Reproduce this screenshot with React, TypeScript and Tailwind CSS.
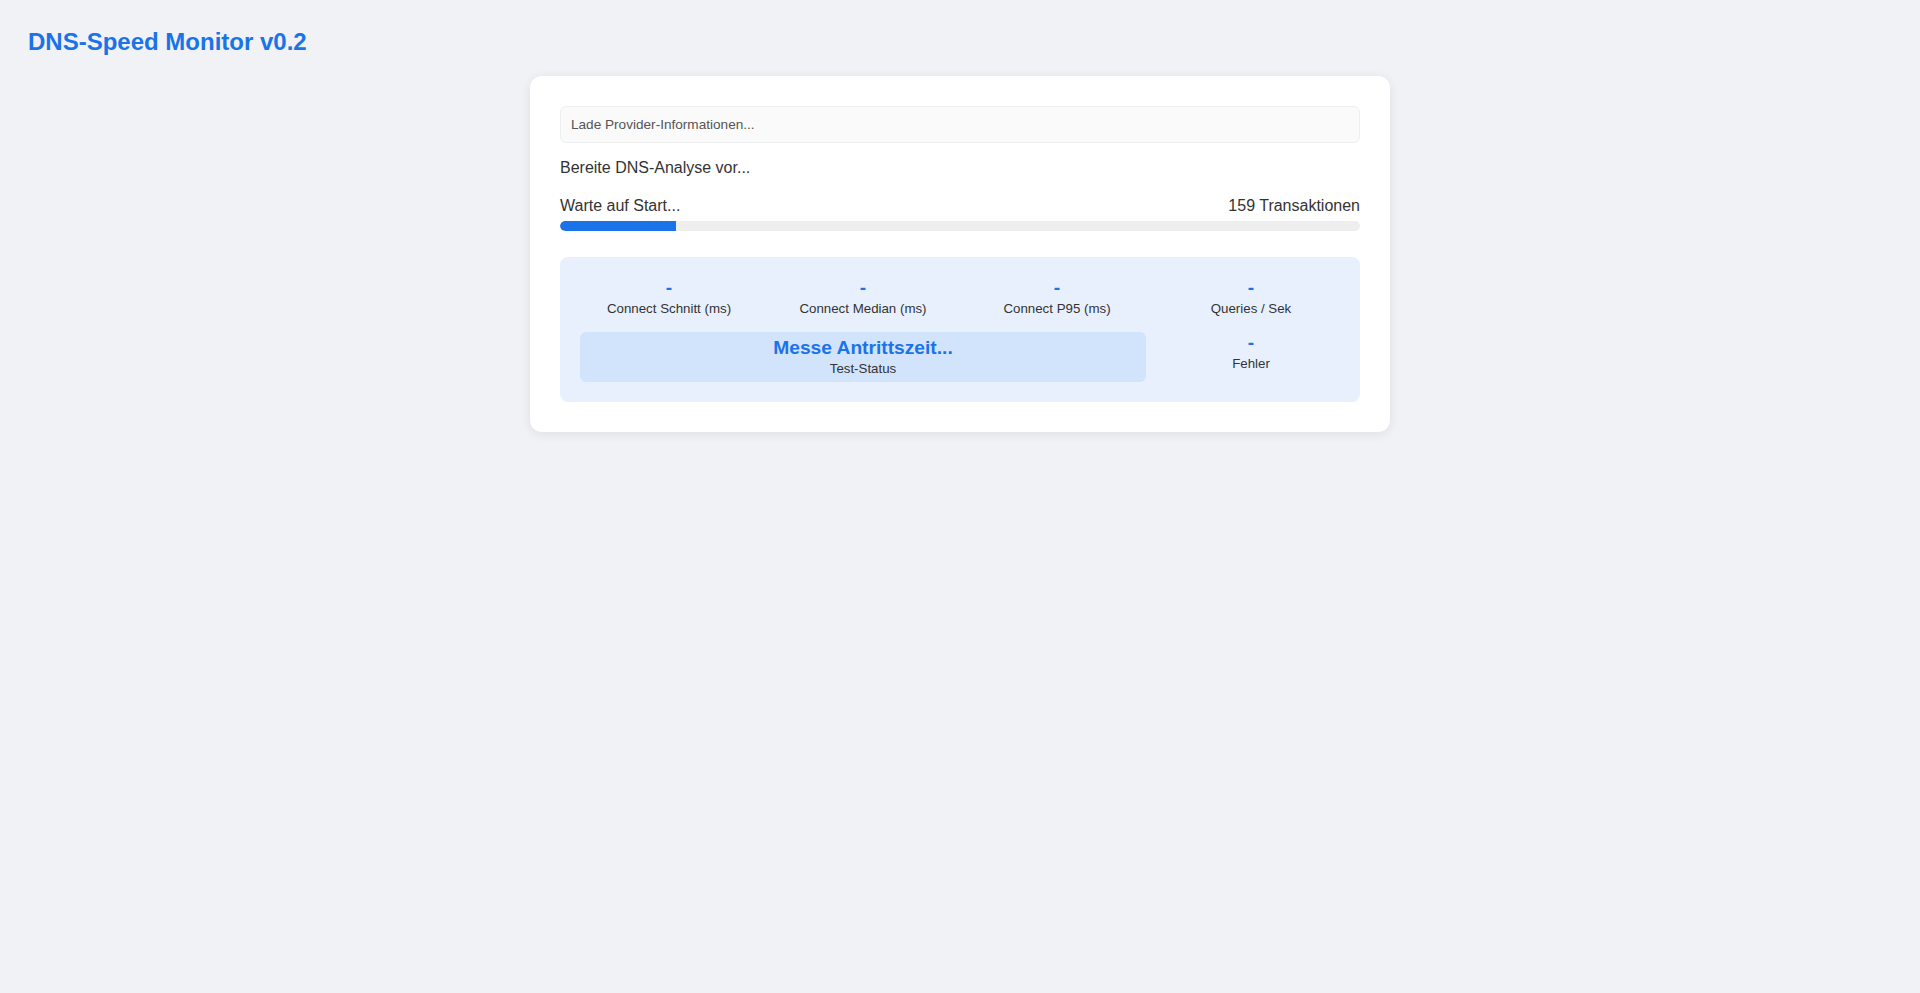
const stats = [
  { value: "-", label: "Connect Schnitt (ms)" },
  { value: "-", label: "Connect Median (ms)" },
  { value: "-", label: "Connect P95 (ms)" },
  { value: "-", label: "Queries / Sek" },
];

function StatCell({ value, label }: { value: string; label: string }) {
  return (
    <div className="flex flex-col items-center text-center">
      <span className="text-[19.2px] font-bold leading-[22px] text-[#1a73e8]">{value}</span>
      <span className="mt-[2px] text-[13.3px] leading-[15px] text-[#333]">{label}</span>
    </div>
  );
}

export default function App() {
  const progress = 14.5;

  return (
    <div
      className="min-h-screen bg-[#f0f2f5] p-[28px] text-[#333]"
      style={{ fontFamily: '"Liberation Sans", Arial, sans-serif' }}
    >
      <h1 className="mb-[20px] text-[24px] font-bold leading-[27.6px] text-[#1a73e8]">
        DNS-Speed Monitor v0.2
      </h1>

      <div className="mx-auto w-[860px] rounded-xl bg-white p-[30px] shadow-[0_2px_12px_rgba(0,0,0,0.08)]">
        <div className="rounded-md border border-[#eee] bg-[#fafafa] px-[10px] py-[10px] text-[13.6px] leading-[15px] text-[#555]">
          Lade Provider-Informationen...
        </div>

        <p className="mt-[16px] text-[16px] leading-[18.4px]">Bereite DNS-Analyse vor...</p>

        <div className="mt-[20px] flex items-center justify-between text-[16px] leading-[18.4px]">
          <span>Warte auf Start...</span>
          <span>159 Transaktionen</span>
        </div>
        <div className="mt-[6px] h-[10px] w-full overflow-hidden rounded-full bg-[#eee]">
          <div className="h-full rounded-l-full bg-[#1a73e8]" style={{ width: `${progress}%` }} />
        </div>

        <div className="mt-[26px] grid grid-cols-4 items-start gap-4 rounded-lg bg-[#e8f0fe] p-[20px]">
          {stats.map((s) => (
            <StatCell key={s.label} value={s.value} label={s.label} />
          ))}
          <div className="col-span-3 flex flex-col items-center rounded-md bg-[#d2e3fc] pt-[5px] pb-[6px] text-center">
            <span className="text-[19.2px] font-bold leading-[22px] text-[#1a73e8]">
              Messe Antrittszeit...
            </span>
            <span className="mt-[2px] text-[13.3px] leading-[15px] text-[#333]">Test-Status</span>
          </div>
          <StatCell value="-" label="Fehler" />
        </div>
      </div>
    </div>
  );
}
